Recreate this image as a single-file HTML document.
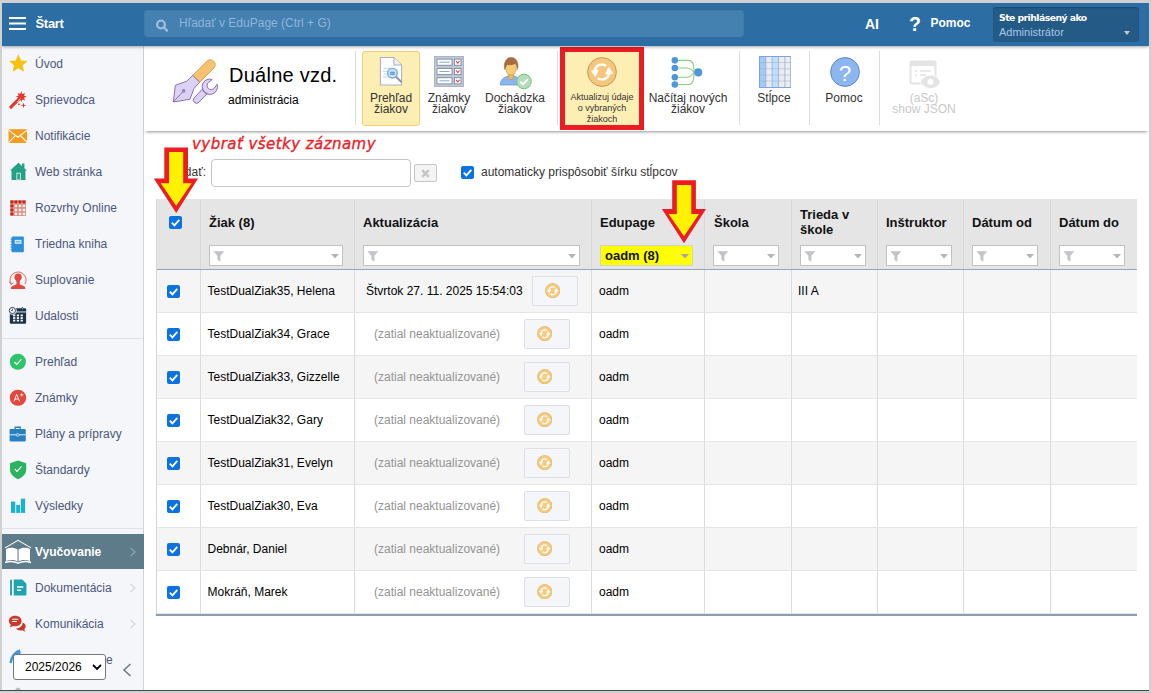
<!DOCTYPE html>
<html lang="sk">
<head>
<meta charset="utf-8">
<title>Duálne vzdelávanie - administrácia</title>
<style>
*{box-sizing:border-box;margin:0;padding:0}
html,body{width:1151px;height:693px;overflow:hidden;background:#d1d1d1;font-family:"Liberation Sans",Arial,sans-serif;font-size:12px;color:#000}
.abs{position:absolute}
#frame{position:absolute;left:2px;top:3px;width:1147px;height:687px;background:#fff;overflow:hidden}
#bottomline{position:absolute;left:0;top:690px;width:1149px;height:1px;background:#3f4a4a}
/* header */
#hdr{position:absolute;left:0;top:0;width:1147px;height:43px;background:#2c6da3;box-shadow:0 1px 3px rgba(0,0,0,.35);z-index:5}
#hdr .burger{position:absolute;left:7px;top:14.2px;width:17px;height:1.7px;background:#fff;box-shadow:0 5.5px 0 #fff,0 11px 0 #fff}
#hdr .start{position:absolute;left:33.5px;top:13px;font-weight:bold;font-size:13px;color:#fff;letter-spacing:-0.3px}
#search{position:absolute;left:142px;top:6.3px;width:600px;height:27.7px;background:#4480b0;border-radius:4px;box-shadow:inset 0 1px 1px rgba(20,60,100,.35)}
#search span{position:absolute;left:35px;top:6.700px;color:#8fb5d8;font-size:12px}
#hdr .ai{position:absolute;left:863px;top:13px;font-weight:bold;font-size:14px;color:#fff;letter-spacing:-0.2px}
#hdr .q{position:absolute;left:907px;top:10px;font-weight:bold;font-size:19.500px;color:#fff}
#hdr .pomoc{position:absolute;left:928.500px;top:13px;font-weight:bold;font-size:12px;color:#fff}
#user{position:absolute;left:991px;top:4px;width:146px;height:35px;background:#245a86;border-radius:3px;box-shadow:inset 0 1px 1px rgba(10,40,70,.35)}
#user .l1{position:absolute;left:6px;top:4.500px;font-weight:bold;font-size:9.300px;color:#fff;font-family:"DejaVu Sans","Liberation Sans",sans-serif;letter-spacing:-0.55px;white-space:nowrap}
#user .l2{position:absolute;left:6px;top:19px;font-size:11px;color:#a9c7ea}
#user .arr{position:absolute;left:131px;top:24px;width:0;height:0;border-left:3.800px solid transparent;border-right:3.800px solid transparent;border-top:4px solid #c8c8c8}
/* sidebar */
#side{position:absolute;left:0;top:43px;width:142px;height:644px;background:#f5f6f9;border-right:1px solid #d0d2d6}
.mi{position:absolute;left:33px;font-size:12px;color:#4a577d;white-space:nowrap;margin-top:1px}
.ic{position:absolute;left:7px;width:18px;height:18px}
.sdiv{position:absolute;left:0;width:141px;height:1px;background:#dfe2e6}
.chev{position:absolute;left:126px;color:#c5c9ce;font-size:12px}
/* toolbar */
#tb{position:absolute;left:142px;top:43px;width:1005px;height:85px;background:#fff;box-shadow:0 3px 3px -2px rgba(0,0,0,.42);z-index:3}
.tsep{position:absolute;top:5px;width:1px;height:74px;background:#dcdcdc}
.tbtn{position:absolute;top:5px;height:74px;text-align:center;font-size:12px;line-height:11px;color:#333;white-space:nowrap}
.tbtn .lbl{position:absolute;left:0;right:0;top:42px}
/* table */
#grid{position:absolute;left:155px;top:196px;width:981px}

#content{position:absolute;left:142px;top:127px;width:1005px;height:560px;background:#fff}
.note{position:absolute;left:48px;top:5px;-webkit-text-stroke:0.35px #ea2128;font-family:"DejaVu Sans","Liberation Sans",cursive;font-style:italic;font-size:15px;color:#ea2128;white-space:nowrap;letter-spacing:0.45px}
#grid{position:absolute;left:12px;top:69px;width:981px;height:418px}
#ghead{position:absolute;left:0;top:0;width:981px;height:71px;background:#e5e5e5;border-bottom:1px solid #93a5ba}
.hc{position:absolute;top:0;height:70px;border-left:1px solid #d9d9d9}
.hl{position:absolute;left:8px;font-weight:bold;font-size:13px;color:#111;white-space:nowrap;line-height:15px}
.fi{position:absolute;top:46px;height:21px;background:#fff;border:1px solid #c2c2c2}
.fi svg.fun{position:absolute;left:3px;top:4.500px}
.fi svg.dd{position:absolute;right:3px;top:8px}
.row{position:absolute;left:0;width:981px;height:43px;border-bottom:1px solid #e6e6e6;font-size:12px;color:#000}
.row.o{background:#f5f5f5}
.c{position:absolute;top:0;height:42px;border-left:1px solid #dcdcdc}
.t{position:absolute;top:14px;white-space:nowrap}
.g{color:#949494}
.cb{position:absolute;width:13px;height:13px;background:#0b73e0;border-radius:2px}
.cb svg{position:absolute;left:0;top:0}
.rb{position:absolute;top:6px;width:46px;height:30px;background:#f5f6fa;border:1px solid #dddee6;border-radius:2px}
.rb svg{position:absolute;left:12px;top:6px}
</style>
</head>
<body>
<div id="frame">
  <div id="hdr">
    <div class="burger"></div>
    <div class="start">Štart</div>
    <div id="search">
      <svg class="abs" style="left:11px;top:9px" width="14" height="14" viewBox="0 0 14 14"><circle cx="6" cy="6.500" r="3.900" fill="none" stroke="#9cbedd" stroke-width="2.300"/><path d="M9 9.500 L12 12.600" stroke="#9cbedd" stroke-width="2.300" stroke-linecap="round"/></svg>
      <span>Hľadať v EduPage (Ctrl + G)</span>
    </div>
    <div class="ai">AI</div>
    <div class="q">?</div>
    <div class="pomoc">Pomoc</div>
    <div id="user"><div class="l1">Ste prihlásený ako</div><div class="l2">Administrátor</div><div class="arr"></div></div>
  </div>
  <div id="side">
<svg class="abs" style="left:5.75px;top:7.35px" width="20.70" height="20.22" viewBox="0 0 18 18" preserveAspectRatio="none"><path d="M9 1.2 L11.3 6.6 L17 7.1 L12.7 10.9 L14 16.6 L9 13.6 L4 16.6 L5.3 10.9 L1 7.1 L6.7 6.6 Z" fill="#f6c10f"/></svg><div class="mi" style="top:10px">Úvod</div>
<svg class="abs" style="left:4px;top:40px" width="26" height="26" viewBox="0 0 26 26"><path d="M4.9 21.200000000000003 L13.600000000000001 12.299999999999997" stroke="#e03a2d" stroke-width="3.1" stroke-linecap="round"/><polygon points="15.30,5.30 16.41,8.02 19.12,6.88 17.98,9.59 20.70,10.70 17.98,11.81 19.12,14.52 16.41,13.38 15.30,16.10 14.19,13.38 11.48,14.52 12.62,11.81 9.90,10.70 12.62,9.59 11.48,6.88 14.19,8.02" fill="#e03a2d"/><path d="M11.6 15.600000000000001 L14.2 12.899999999999999" stroke="#f6d9d5" stroke-width="0.9" stroke-linecap="round"/><polygon points="17.50,16.50 18.14,18.76 20.40,19.40 18.14,20.04 17.50,22.30 16.86,20.04 14.60,19.40 16.86,18.76" fill="#e03a2d"/><ellipse cx="12.899999999999999" cy="18.299999999999997" rx="1.1" ry="0.7" fill="#e03a2d"/></svg><div class="mi" style="top:46px">Sprievodca</div>
<svg class="abs" style="left:5.98px;top:79.82px" width="18.80" height="19.11" viewBox="0 0 18 18" preserveAspectRatio="none"><rect x="0.5" y="3" width="18" height="13" fill="#f39c1f"/><path d="M0.5 3.6 L9.5 10.6 L18.5 3.6 M0.5 15.6 L7 9 M18.5 15.6 L12 9" stroke="#fff" stroke-width="1" fill="none"/></svg><div class="mi" style="top:82px">Notifikácie</div>
<svg class="abs" style="left:6.54px;top:115.33px" width="19.01" height="20.09" viewBox="0 0 18 18" preserveAspectRatio="none"><path d="M1 8.6 L9 1.5 L17 8.6 L15.6 8.6 L15.6 17 L2.4 17 L2.4 8.6 Z" fill="#23a085"/><rect x="12.4" y="2.2" width="2.2" height="4" fill="#23a085"/><rect x="7.4" y="11" width="3.4" height="6" fill="none" stroke="#bfe6dc" stroke-width="1"/></svg><div class="mi" style="top:118px">Web stránka</div>
<svg class="abs" style="left:8px;top:154px" width="16" height="16" viewBox="0 0 16 16"><rect x="0" y="0" width="16" height="16" rx="1" fill="#dc8a80"/><rect x="0" y="0" width="16" height="4" fill="#e3a199"/><rect x="0" y="0" width="4" height="16" fill="#e3a199"/><rect x="0.5" y="0.5" width="3" height="3" rx=".8" fill="#c1291b"/><rect x="4.4" y="0.5" width="3" height="3" rx=".8" fill="#c1291b"/><rect x="8.5" y="0.5" width="3" height="3" rx=".8" fill="#c1291b"/><rect x="12.4" y="0.5" width="3" height="3" rx=".8" fill="#c1291b"/><rect x="0.5" y="4.4" width="3" height="3" rx=".8" fill="#c1291b"/><rect x="4.65" y="4.65" width="2.500" height="2.500" fill="#fbf3f2"/><rect x="8.75" y="4.65" width="2.500" height="2.500" fill="#fbf3f2"/><rect x="12.65" y="4.65" width="2.500" height="2.500" fill="#fbf3f2"/><rect x="0.5" y="8.5" width="3" height="3" rx=".8" fill="#c1291b"/><rect x="4.65" y="8.75" width="2.500" height="2.500" fill="#fbf3f2"/><rect x="8.75" y="8.75" width="2.500" height="2.500" fill="#fbf3f2"/><rect x="12.65" y="8.75" width="2.500" height="2.500" fill="#fbf3f2"/><rect x="0.5" y="12.4" width="3" height="3" rx=".8" fill="#c1291b"/><rect x="4.65" y="12.65" width="2.500" height="2.500" fill="#fbf3f2"/><rect x="8.75" y="12.65" width="2.500" height="2.500" fill="#fbf3f2"/><rect x="12.65" y="12.65" width="2.500" height="2.500" fill="#fbf3f2"/></svg><div class="mi" style="top:154px">Rozvrhy Online</div>
<svg class="abs" style="left:6.42px;top:189.12px" width="18.56" height="18.96" viewBox="0 0 18 18" preserveAspectRatio="none"><rect x="3.4" y="1.5" width="12" height="15" rx="1" fill="#2b8fd9"/><rect x="6.5" y="4.6" width="6.6" height="3.8" fill="#d6ebfa"/><rect x="7.6" y="5.8" width="4.4" height="1.3" fill="#2b8fd9" opacity=".6"/><path d="M2.6 4h1.6M2.6 6.5h1.6M2.6 9h1.6M2.6 11.5h1.6M2.6 14h1.6" stroke="#2b8fd9" stroke-width="1"/></svg><div class="mi" style="top:190px">Triedna kniha</div>
<svg class="abs" style="left:6px;top:222px" width="22" height="23" viewBox="0 0 22 23"><path d="M3.300 16.200 A8 8 0 1 1 16.900 16.200" fill="none" stroke="#e4574b" stroke-width=".9"/><path d="M1.300 13.600l1.700 2.900 2.500-1.700" fill="none" stroke="#e4574b" stroke-width=".9"/><ellipse cx="10.100" cy="9.300" rx="3.600" ry="3.700" fill="#e2483c"/><path d="M2.900 21.100C2.900 19 3.600 18.200 5 17.700L7.600 16.800C8.300 16.500 8.500 16 8.500 15.300L8.200 11.500H12L11.700 15.300C11.700 16 11.900 16.500 12.600 16.800L15.200 17.700C16.600 18.200 17.300 19 17.300 21.100Z" fill="#e2483c"/></svg><div class="mi" style="top:226px">Suplovanie</div>
<svg class="abs" style="left:6px;top:260px" width="20" height="19" viewBox="0 0 20 19"><rect x="1.800" y="2.300" width="16.300" height="15.500" rx="1" fill="#1f3347"/><rect x="13.700" y="1" width="1.500" height="3" rx=".7" fill="#1f3347"/><rect x="14.150" y="1.800" width=".6" height="1.600" fill="#dfe4ea"/><rect x="5" y="5" width="13.100" height="1.800" fill="#8595a4"/><circle cx="4.400" cy="4.500" r="4.300" fill="#f5f6fa"/><circle cx="4.400" cy="4.500" r="3.100" fill="#f5f6fa" stroke="#1f3347" stroke-width=".9"/><path d="M4.400 2.700v2h-1.300" stroke="#1f3347" stroke-width=".8" fill="none"/><rect x="5.10" y="8.50" width="2.200" height="1.800" fill="#fff"/><rect x="8.80" y="8.50" width="2.200" height="1.800" fill="#fff"/><rect x="12.60" y="8.50" width="2.200" height="1.800" fill="#fff"/><rect x="5.10" y="11.10" width="2.200" height="1.800" fill="#fff"/><rect x="8.80" y="11.10" width="2.200" height="1.800" fill="#fff"/><rect x="12.60" y="11.10" width="2.200" height="1.800" fill="#fff"/><rect x="5.10" y="13.70" width="2.200" height="1.800" fill="#fff"/><rect x="8.80" y="13.70" width="2.200" height="1.800" fill="#fff"/><rect x="12.60" y="13.70" width="2.200" height="1.800" fill="#fff"/></svg><div class="mi" style="top:262px">Udalosti</div>
<svg class="abs" style="left:6.15px;top:305.96px" width="19.70" height="19.58" viewBox="0 0 18 18" preserveAspectRatio="none"><circle cx="9" cy="9" r="7.400" fill="#2fc36b"/><path d="M5.800 9.200l2.200 2.200 4.200-4.600" stroke="#fff" stroke-width="1" fill="none"/></svg><div class="mi" style="top:308px">Prehľad</div>
<svg class="abs" style="left:5.93px;top:341.76px" width="19.95" height="19.58" viewBox="0 0 18 18" preserveAspectRatio="none"><circle cx="9" cy="9" r="7.400" fill="#e2463c"/><path d="M5.400 12.400l2.400-6.600 2.600 6.400M6.300 10.300l3.100-.3M11 6.300h2.800M12.400 4.900v2.800" stroke="#fff" stroke-width=".8" fill="none"/></svg><div class="mi" style="top:344px">Známky</div>
<svg class="abs" style="left:6.32px;top:378.01px" width="18.94" height="19.43" viewBox="0 0 18 18" preserveAspectRatio="none"><rect x="1.500" y="4.600" width="15.400" height="11.600" rx="1" fill="#2a7fc0"/><path d="M6.800 4.600v-1.600h4.800v1.600" stroke="#2a7fc0" stroke-width="1.200" fill="none"/><path d="M1.500 10h15.400" stroke="#d6e8f6" stroke-width="1"/><rect x="8" y="9" width="2.400" height="2.200" rx=".6" fill="#2a7fc0" stroke="#d6e8f6" stroke-width=".8"/></svg><div class="mi" style="top:380px">Plány a prípravy</div>
<svg class="abs" style="left:5.88px;top:413.21px" width="20.25" height="20.89" viewBox="0 0 18 18" preserveAspectRatio="none"><path d="M9 1.200l7.200 2.400v5.200c0 4-3 6.800-7.200 8.600C4.800 15.600 1.800 12.800 1.800 8.800V3.600z" fill="#2bb35f"/><path d="M6 8.600l2.100 2.100 3.900-4.300" stroke="#fff" stroke-width="1" fill="none"/></svg><div class="mi" style="top:416px">Štandardy</div>
<svg class="abs" style="left:8px;top:452px" width="17" height="16" viewBox="0 0 17 16"><rect x="1" y="3.600" width="4.300" height="11.300" fill="#1ab3cf"/><rect x="6.200" y="6.900" width="3.900" height="8" fill="#1ab3cf"/><rect x="10.800" y=".7" width="4.300" height="14.200" fill="#1ab3cf"/></svg><div class="mi" style="top:452px">Výsledky</div>
<div class="sdiv" style="top:292px"></div><div class="sdiv" style="top:482px"></div>
<div class="abs" style="left:0;top:488px;width:142px;height:35px;background:#5e7b8a"></div>
<svg class="abs" style="left:2px;top:493px" width="28.100" height="26" viewBox="0 0 27 25"><path d="M1 8.500 L13.500 1.200 L26 8.500" stroke="#fff" stroke-width="1" fill="none"/><path d="M2 9.500c3.500-1.600 7.500-1.600 11 .600v11.500c-3.500-1.800-7.500-1.800-11-.400z M25 9.500c-3.500-1.600-7.500-1.600-11 .600v11.500c3.500-1.800 7.500-1.800 11-.400z" fill="#fff"/><path d="M1 22.600c4-1.300 8.500-1.300 12.500.600 4-1.900 8.500-1.900 12.500-.600" stroke="#fff" stroke-width="1.300" fill="none"/></svg>
<div class="mi" style="top:498px;color:#fff;font-weight:bold;letter-spacing:0">Vyučovanie</div>
<svg class="abs" style="left:127px;top:501px" width="8" height="10" viewBox="0 0 8 10"><path d="M1.500 1l4.500 4-4.500 4" stroke="#8ea3af" stroke-width="1.200" fill="none"/></svg>
<svg class="abs" style="left:6.740px;top:532.200px" width="19.040" height="19.200" viewBox="0 0 18 18" preserveAspectRatio="none"><rect x="1" y="1.500" width="1.800" height="15" rx=".9" fill="#1fa3b0"/><path d="M4.500 1.500h8l4 4v10a1 1 0 0 1-1 1h-11z" fill="#1fa3b0"/><path d="M7.500 8.500h6M7.500 11.500h4" stroke="#fff" stroke-width="1.500"/></svg>
<div class="mi" style="top:534px">Dokumentácia</div>
<svg class="abs" style="left:127px;top:537px" width="8" height="10" viewBox="0 0 8 10"><path d="M1.500 1l4.500 4-4.500 4" stroke="#d3d7db" stroke-width="1.200" fill="none"/></svg>
<svg class="abs" style="left:6.480px;top:568.100px" width="18.540" height="20.140" viewBox="0 0 18 18" preserveAspectRatio="none"><path d="M7 1.500c3.600 0 6.200 2 6.200 4.700s-2.600 4.700-6.200 4.700c-.7 0-1.400-.1-2-.2L1.800 12l1-2.400C1.600 8.700.8 7.500.8 6.200.8 3.500 3.400 1.500 7 1.500z" fill="#c83a2e"/><path d="M14.300 7.500c1.700.7 2.900 2 2.900 3.500 0 1-.5 1.900-1.400 2.600l.8 2.200-2.700-1.200c-.5.100-1.100.2-1.700.2-2 0-3.700-.7-4.600-1.800 3.700-.2 6.500-2.300 6.700-5.500z" fill="#c83a2e"/><path d="M4 4.800h6M4 6.800h4.500" stroke="#fff" stroke-width=".9"/></svg>
<div class="mi" style="top:570px">Komunikácia</div>
<svg class="abs" style="left:127px;top:573px" width="8" height="10" viewBox="0 0 8 10"><path d="M1.500 1l4.500 4-4.500 4" stroke="#d3d7db" stroke-width="1.200" fill="none"/></svg>
<svg class="abs" style="left:7px;top:603px" width="16" height="16" viewBox="0 0 16 16"><path d="M1.500 14 C2.500 8 5 3.500 11 1.500" stroke="#3b97e0" stroke-width="2.400" fill="none"/><path d="M6 4.500 L12 2.500 L10.500 8" fill="#3b97e0"/></svg>
<div class="mi" style="left:104px;top:606px">e</div>
<svg class="abs" style="left:12px;top:640px" width="8" height="5" viewBox="0 0 8 5"><path d="M1 5 L2 2.500 L4 1.500 L6 2.500 L7 5" fill="#b3bcc5"/></svg>
<div class="abs" id="yearsel" style="left:11px;top:608px;width:93px;height:26px;background:#fff;border:1px solid #767676;border-radius:3px"><span class="abs" style="left:11px;top:5px;font-size:12px;color:#000">2025/2026</span><svg class="abs" style="left:77.500px;top:9px" width="10" height="7" viewBox="0 0 10 7"><path d="M1 1l4 4 4-4" stroke="#000" stroke-width="1.800" fill="none"/></svg></div>
<svg class="abs" style="left:120px;top:617px" width="10" height="14" viewBox="0 0 10 14"><path d="M8.500 1 L2 7 L8.500 13" stroke="#6d7c88" stroke-width="1.600" fill="none"/></svg>
</div>
  <div id="tb">
<!-- title -->
<svg class="abs" style="left:25px;top:10px" width="53.25" height="53.25" viewBox="0 0 50 50"><path d="M22.3 18.2 L35.7 4.8 A4.6 4.6 0 0 1 42.2 11.3 L28.8 24.7 Z" fill="#f6c170" stroke="#d9a24c" stroke-width=".9" stroke-linejoin="round"/><path d="M22.3 18.2 L16.6 23.7 L6.0 27.5 L4.0 43.2 L19.7 40.6 L23.5 30.4 L28.8 24.7 Z" fill="#dcd2f3" stroke="#8a68ad" stroke-width=".9" stroke-linejoin="round"/><path d="M4.0 43.2 L13.7 32.8" stroke="#8a68ad" stroke-width=".9"/><circle cx="13.7" cy="32.8" r="1.700" fill="#9b7cbd"/><path d="M35.8 35.3 L28.1 43.4 A3.0 3.0 0 0 1 23.7 39.3 L31.3 31.1 A6.9 6.9 0 0 0 45.2 26.5 L42.4 30.4 A3.4 3.4 0 0 1 36.9 24.9 L40.6 22.1 A6.9 6.9 0 0 0 35.8 35.3 Z" fill="#dcd2f3" stroke="#8a68ad" stroke-width=".9" stroke-linejoin="round"/></svg>
<div class="abs" style="left:85px;top:18px;font-size:20px;color:#000;white-space:nowrap;letter-spacing:.25px">Duálne vzd.</div>
<div class="abs" style="left:84px;top:47px;font-size:12px;color:#000">administrácia</div>
<div class="tsep" style="left:211px"></div>

<!-- Prehlad ziakov (active) -->
<div class="tbtn" style="left:218px;width:58px;height:75px;background:#fdeeb4;border:1px solid #f3cf74;border-radius:3px">
  <svg class="abs" style="left:16px;top:4px" width="25" height="30.500" viewBox="0 0 26 32" preserveAspectRatio="none"><path d="M1.500 1.500h14l8 8v21h-22z" fill="#fdfdfe" stroke="#a9b3c3" stroke-width="1.100"/><path d="M15.500 1.500v8h8" fill="#eef0f4" stroke="#a9b3c3" stroke-width="1.100"/><path d="M5 13h8M4 16h6M5 19h5M4 22h7" stroke="#b9d3ef" stroke-width="1"/><circle cx="14" cy="18" r="5" fill="#cfe5fa" stroke="#7aa7d6" stroke-width="1.500"/><path d="M11.500 17h5M11.500 19h5" stroke="#3f86d0" stroke-width="1.200"/><path d="M18 22l5 5" stroke="#8f9bab" stroke-width="2.200" stroke-linecap="round"/></svg>
  <div class="lbl" style="top:41px;left:-1px;right:-1px">Prehľad<br>žiakov</div>
</div>
<!-- Znamky ziakov -->
<div class="tbtn" style="left:276px;width:58px">
  <svg class="abs" style="left:14px;top:5px" width="30" height="31" viewBox="0 0 30 30" preserveAspectRatio="none"><rect x=".5" y=".5" width="29" height="29" fill="#c0cad6" stroke="#aab5c4"/><g fill="#fdfdfe" stroke="#7f8b9d" stroke-width=".9"><rect x="3" y="3" width="15" height="6"/><rect x="3" y="12" width="15" height="6"/><rect x="3" y="21" width="15" height="6"/><rect x="20.500" y="3" width="6.500" height="6"/><rect x="20.500" y="12" width="6.500" height="6"/><rect x="20.500" y="21" width="6.500" height="6"/></g><path d="M5.500 6h10M5.500 15h10M5.500 24h10" stroke="#6b95cf" stroke-width=".8"/><path d="M22 5l1.800 2 1.800-2M22 14l1.800 2 1.800-2M22 23l1.800 2 1.800-2" stroke="#e0484f" stroke-width="1.100" fill="none"/></svg>
  <div class="lbl">Známky<br>žiakov</div>
</div>
<!-- Dochadzka -->
<div class="tbtn" style="left:336px;width:70px">
  <svg class="abs" style="left:18px;top:5px" width="34" height="34" viewBox="0 0 34 34"><path d="M2.300 29c0-5 3-8 8.200-9h5c5.200 1 8.200 4 8.200 9z" fill="#8bb5ec" stroke="#5f93d6" stroke-width=".7"/><path d="M10.300 17h5.400v4.300c-.6 1.400-1.600 2.200-2.700 2.200s-2.100-.8-2.700-2.200z" fill="#edb95f" stroke="#c98f3f" stroke-width=".6"/><ellipse cx="13" cy="12.300" rx="5.300" ry="6.800" fill="#f6cd76" stroke="#cf9a45" stroke-width=".7"/><path d="M6.700 13.500c-1.300-6 1.200-12 6.300-12s8 4.500 6.600 12c-.4-2.800-1-4.800-2.400-6.300-2.200 1.600-5.700 2.100-7.900 1.200-1.200 1.300-2 3-2.600 5.100z" fill="#a86c40" stroke="#94592f" stroke-width=".5"/><circle cx="26" cy="25.500" r="7.300" fill="#b4dcb8" stroke="#79bf86" stroke-width="1"/><path d="M22.300 25.700l2.700 2.600 4.800-5.200" stroke="#fff" stroke-width="2" fill="none"/></svg>
  <div class="lbl">Dochádzka<br>žiakov</div>
</div>
<div class="tsep" style="left:413px"></div>
<!-- Aktualizuj (highlighted red) -->
<div class="abs" style="left:416px;top:1px;width:84px;height:83px;background:#ec1c24"></div>
<div class="tbtn" style="left:421px;top:6px;width:74px;height:73px;background:#fdeeb4;font-size:9px;line-height:11px">
  <svg class="abs" style="left:22px;top:5px" width="30" height="30" viewBox="0 0 30 30"><circle cx="15" cy="15" r="14.400" fill="#f5c77c" stroke="#b98a4a" stroke-width=".8"/><path d="M19.30 8.86 A7.5 7.5 0 0 0 7.72 13.19" stroke="#fff" stroke-width="2.400" fill="none"/><path d="M10.70 21.14 A7.5 7.5 0 0 0 22.28 16.81" stroke="#fff" stroke-width="2.400" fill="none"/><path d="M3.600 13.600L11.900 12.400L8.500 20.200Z" fill="#fff"/><path d="M26.400 16.400L18.100 17.600L21.500 9.800Z" fill="#fff"/></svg>
  <div class="lbl" style="top:40px">Aktualizuj údaje<br>o vybraných<br>žiakoch</div>
</div>
<!-- Nacitaj novych -->
<div class="tbtn" style="left:500px;width:88px">
  <svg class="abs" style="left:27px;top:5.900px" width="32.500" height="30.850" viewBox="0 0 34 32" preserveAspectRatio="none"><g fill="none" stroke="#8fcf7a" stroke-width="1.100"><path d="M4 3.500h14c5 0 6 4 6 12.500"/><path d="M4 11.500h12c4 0 6 1.500 8 4.500"/><path d="M4 21h12c4 0 6-2 8-5"/><path d="M4 28.500h14c5 0 6-4 6-12.500"/></g><g fill="#4e96dc"><circle cx="4" cy="3.500" r="3.400"/><circle cx="4" cy="11.500" r="3.400"/><circle cx="4" cy="21" r="3.400"/><circle cx="4" cy="28.500" r="3.400"/><circle cx="28.500" cy="16" r="4.200"/></g></svg>
  <div class="lbl">Načítaj nových<br>žiakov</div>
</div>
<div class="tsep" style="left:595px"></div>
<!-- Stlpce -->
<div class="tbtn" style="left:604px;width:52px">
  <svg class="abs" style="left:11px;top:5px" width="32.400" height="32" viewBox="0 0 32 32" preserveAspectRatio="none"><rect x=".5" y=".5" width="31" height="31" fill="#ececec"/><rect x=".5" y=".5" width="6.200" height="31" fill="#a3cbf5"/><rect x="12.900" y=".5" width="6.400" height="31" fill="#bfe0fc"/><path d="M0 6.500h32M0 12.700h32M0 18.900h32M0 25.100h32" stroke="#86abdc" stroke-opacity=".45" stroke-width="1"/><path d="M6.700 0v32M12.900 0v32M19.300 0v32M25.600 0v32" stroke="#86a6d0" stroke-opacity=".75" stroke-width=".9"/><rect x=".5" y=".5" width="31" height="31" fill="none" stroke="#7ea5da" stroke-width="1"/></svg>
  <div class="lbl">Stĺpce</div>
</div>
<div class="tsep" style="left:665px"></div>
<!-- Pomoc -->
<div class="tbtn" style="left:674px;width:52px">
  <svg class="abs" style="left:12px;top:6px" width="30" height="30" viewBox="0 0 30 30"><circle cx="15" cy="15" r="14.400" fill="#8cb6ef" stroke="#5580c0" stroke-width=".9"/><text x="15" y="23.700" font-family="Liberation Sans, sans-serif" font-size="22.500" fill="#fff" text-anchor="middle">?</text></svg>
  <div class="lbl">Pomoc</div>
</div>
<div class="tsep" style="left:735px"></div>
<!-- aSc show JSON -->
<div class="tbtn" style="left:740px;width:80px;color:#c9c9c9">
  <svg class="abs" style="left:25px;top:9px" width="32" height="30" viewBox="0 0 32 30"><rect x="1.500" y="1.500" width="25" height="22" rx="1.500" fill="#fff" stroke="#e4e4e4" stroke-width="2"/><rect x="1" y="1" width="26" height="5" fill="#e4e4e4"/><path d="M6 11h2M11 11h11M6 15h2M11 15h6" stroke="#e4e4e4" stroke-width="1.500"/><path d="M11 22c3-5.500 8-7 11-7s7 1.500 9.500 7c-2.500 5-6.500 6.500-9.500 6.500s-8-1.500-11-6.500z" fill="#e4e4e4" stroke="#fff" stroke-width="1"/><circle cx="21.500" cy="22" r="3" fill="#fff"/></svg>
  <div class="lbl">(aSc)<br>show JSON</div>
</div>
</div>
  <div id="content">
<div class="note">vybrať všetky záznamy</div>
<div class="abs" style="left:22px;top:35px;font-size:12px;color:#333">Hľadať:</div>
<div class="abs" style="left:67px;top:29px;width:200px;height:28px;border:1px solid #c4c4c4;border-radius:4px;background:#fff"></div>
<div class="abs" style="left:270px;top:34px;width:23px;height:18px;border:1px solid #c6c6c6;border-radius:2px;background:#f4f4f4"><svg class="abs" style="left:6px;top:3.500px" width="9" height="9" viewBox="0 0 9 9"><path d="M1.200 1.200l6.600 6.600M7.800 1.200l-6.600 6.600" stroke="#c6c6c6" stroke-width="2.600"/></svg></div>
<div class="cb" style="left:317px;top:36px"><svg width="13" height="13" viewBox="0 0 13 13"><path d="M2.800 6.700l2.600 2.600 4.900-5.400" stroke="#fff" stroke-width="1.900" fill="none"/></svg></div>
<div class="abs" style="left:337px;top:35px;font-size:12px;color:#333;white-space:nowrap">automaticky prispôsobiť šírku stĺpcov</div>
<div id="grid"><div id="ghead"><div class="cb" style="left:13px;top:17px"><svg width="13" height="13" viewBox="0 0 13 13"><path d="M2.800 6.700l2.600 2.600 4.900-5.400" stroke="#fff" stroke-width="1.900" fill="none"/></svg></div><div class="hc" style="left:44px;width:155px"><div class="hl" style="top:16px">Žiak (8)</div><div class="fi" style="left:8px;width:134px"><svg class="fun" width="12" height="11" viewBox="0 0 12 11"><path d="M.3 .2h11l-3.900 4.600v5.900l-3-2v-3.900z" fill="#c3c4c9"/></svg><svg class="dd" width="8" height="5" viewBox="0 0 8 5"><path d="M0 0h8l-4 4.500z" fill="#b5b5b5"/></svg></div></div><div class="hc" style="left:198px;width:237px"><div class="hl" style="top:16px">Aktualizácia</div><div class="fi" style="left:8px;width:217px"><svg class="fun" width="12" height="11" viewBox="0 0 12 11"><path d="M.3 .2h11l-3.900 4.600v5.900l-3-2v-3.900z" fill="#c3c4c9"/></svg><svg class="dd" width="8" height="5" viewBox="0 0 8 5"><path d="M0 0h8l-4 4.500z" fill="#b5b5b5"/></svg></div></div><div class="hc" style="left:435px;width:113px"><div class="hl" style="top:16px">Edupage</div><div class="fi" style="left:8px;width:93px;background:#ffff00;border-color:#d4d4c4"><span class="abs" style="left:4px;top:2px;font-weight:bold;font-size:13px;color:#111;white-space:nowrap">oadm (8)</span><svg class="dd" width="8" height="5" viewBox="0 0 8 5"><path d="M0 0h8l-4 4.500z" fill="#aaa2aa"/></svg></div></div><div class="hc" style="left:548px;width:87px"><div class="hl" style="top:16px;left:9px">Škola</div><div class="fi" style="left:8px;width:66px"><svg class="fun" width="12" height="11" viewBox="0 0 12 11"><path d="M.3 .2h11l-3.900 4.600v5.900l-3-2v-3.900z" fill="#c3c4c9"/></svg><svg class="dd" width="8" height="5" viewBox="0 0 8 5"><path d="M0 0h8l-4 4.500z" fill="#b5b5b5"/></svg></div></div><div class="hc" style="left:635px;width:86px"><div class="hl" style="top:8px">Trieda v<br>škole</div><div class="fi" style="left:8px;width:66px"><svg class="fun" width="12" height="11" viewBox="0 0 12 11"><path d="M.3 .2h11l-3.900 4.600v5.900l-3-2v-3.900z" fill="#c3c4c9"/></svg><svg class="dd" width="8" height="5" viewBox="0 0 8 5"><path d="M0 0h8l-4 4.500z" fill="#b5b5b5"/></svg></div></div><div class="hc" style="left:721px;width:86px"><div class="hl" style="top:16px">Inštruktor</div><div class="fi" style="left:8px;width:66px"><svg class="fun" width="12" height="11" viewBox="0 0 12 11"><path d="M.3 .2h11l-3.900 4.600v5.900l-3-2v-3.900z" fill="#c3c4c9"/></svg><svg class="dd" width="8" height="5" viewBox="0 0 8 5"><path d="M0 0h8l-4 4.500z" fill="#b5b5b5"/></svg></div></div><div class="hc" style="left:807px;width:87px"><div class="hl" style="top:16px">Dátum od</div><div class="fi" style="left:8px;width:66px"><svg class="fun" width="12" height="11" viewBox="0 0 12 11"><path d="M.3 .2h11l-3.900 4.600v5.900l-3-2v-3.900z" fill="#c3c4c9"/></svg><svg class="dd" width="8" height="5" viewBox="0 0 8 5"><path d="M0 0h8l-4 4.500z" fill="#b5b5b5"/></svg></div></div><div class="hc" style="left:894px;width:87px"><div class="hl" style="top:16px">Dátum do</div><div class="fi" style="left:8px;width:66px"><svg class="fun" width="12" height="11" viewBox="0 0 12 11"><path d="M.3 .2h11l-3.900 4.600v5.900l-3-2v-3.900z" fill="#c3c4c9"/></svg><svg class="dd" width="8" height="5" viewBox="0 0 8 5"><path d="M0 0h8l-4 4.500z" fill="#b5b5b5"/></svg></div></div></div><div class="row o" style="top:71px"><div class="cb" style="left:11px;top:15px"><svg width="13" height="13" viewBox="0 0 13 13"><path d="M2.800 6.700l2.600 2.600 4.900-5.400" stroke="#fff" stroke-width="1.900" fill="none"/></svg></div><div class="c" style="left:44px;width:155px"><span class="t" style="left:6.500px">TestDualZiak35, Helena</span></div><div class="c" style="left:198px;width:237px"><span class="t" style="left:11px">Štvrtok 27. 11. 2025 15:54:03</span><div class="rb" style="left:177px"><svg width="15.400" height="15.400" viewBox="0 0 30 30"><circle cx="15" cy="15" r="14" fill="#f6cb80" stroke="#e3b266" stroke-width="1.500"/><path d="M19.30 8.86 A7.5 7.5 0 0 0 7.72 13.19" stroke="#fff" stroke-width="2.600" fill="none"/><path d="M10.70 21.14 A7.5 7.5 0 0 0 22.28 16.81" stroke="#fff" stroke-width="2.600" fill="none"/><path d="M3.600 13.600L11.900 12.400L8.500 20.200Z" fill="#fff"/><path d="M26.400 16.400L18.100 17.600L21.500 9.800Z" fill="#fff"/></svg></div></div><div class="c" style="left:435px;width:113px"><span class="t" style="left:7px">oadm</span></div><div class="c" style="left:548px;width:87px"></div><div class="c" style="left:635px;width:86px"><span class="t" style="left:6px">III A</span></div><div class="c" style="left:721px;width:86px"></div><div class="c" style="left:807px;width:87px"></div><div class="c" style="left:894px;width:87px"></div></div><div class="row" style="top:114px"><div class="cb" style="left:11px;top:15px"><svg width="13" height="13" viewBox="0 0 13 13"><path d="M2.800 6.700l2.600 2.600 4.900-5.400" stroke="#fff" stroke-width="1.900" fill="none"/></svg></div><div class="c" style="left:44px;width:155px"><span class="t" style="left:6.500px">TestDualZiak34, Grace</span></div><div class="c" style="left:198px;width:237px"><span class="t g" style="left:19px">(zatial neaktualizované)</span><div class="rb" style="left:169px"><svg width="15.400" height="15.400" viewBox="0 0 30 30"><circle cx="15" cy="15" r="14" fill="#f6cb80" stroke="#e3b266" stroke-width="1.500"/><path d="M19.30 8.86 A7.5 7.5 0 0 0 7.72 13.19" stroke="#fff" stroke-width="2.600" fill="none"/><path d="M10.70 21.14 A7.5 7.5 0 0 0 22.28 16.81" stroke="#fff" stroke-width="2.600" fill="none"/><path d="M3.600 13.600L11.900 12.400L8.500 20.200Z" fill="#fff"/><path d="M26.400 16.400L18.100 17.600L21.500 9.800Z" fill="#fff"/></svg></div></div><div class="c" style="left:435px;width:113px"><span class="t" style="left:7px">oadm</span></div><div class="c" style="left:548px;width:87px"></div><div class="c" style="left:635px;width:86px"></div><div class="c" style="left:721px;width:86px"></div><div class="c" style="left:807px;width:87px"></div><div class="c" style="left:894px;width:87px"></div></div><div class="row o" style="top:157px"><div class="cb" style="left:11px;top:15px"><svg width="13" height="13" viewBox="0 0 13 13"><path d="M2.800 6.700l2.600 2.600 4.900-5.400" stroke="#fff" stroke-width="1.900" fill="none"/></svg></div><div class="c" style="left:44px;width:155px"><span class="t" style="left:6.500px">TestDualZiak33, Gizzelle</span></div><div class="c" style="left:198px;width:237px"><span class="t g" style="left:19px">(zatial neaktualizované)</span><div class="rb" style="left:169px"><svg width="15.400" height="15.400" viewBox="0 0 30 30"><circle cx="15" cy="15" r="14" fill="#f6cb80" stroke="#e3b266" stroke-width="1.500"/><path d="M19.30 8.86 A7.5 7.5 0 0 0 7.72 13.19" stroke="#fff" stroke-width="2.600" fill="none"/><path d="M10.70 21.14 A7.5 7.5 0 0 0 22.28 16.81" stroke="#fff" stroke-width="2.600" fill="none"/><path d="M3.600 13.600L11.900 12.400L8.500 20.200Z" fill="#fff"/><path d="M26.400 16.400L18.100 17.600L21.500 9.800Z" fill="#fff"/></svg></div></div><div class="c" style="left:435px;width:113px"><span class="t" style="left:7px">oadm</span></div><div class="c" style="left:548px;width:87px"></div><div class="c" style="left:635px;width:86px"></div><div class="c" style="left:721px;width:86px"></div><div class="c" style="left:807px;width:87px"></div><div class="c" style="left:894px;width:87px"></div></div><div class="row" style="top:200px"><div class="cb" style="left:11px;top:15px"><svg width="13" height="13" viewBox="0 0 13 13"><path d="M2.800 6.700l2.600 2.600 4.900-5.400" stroke="#fff" stroke-width="1.900" fill="none"/></svg></div><div class="c" style="left:44px;width:155px"><span class="t" style="left:6.500px">TestDualZiak32, Gary</span></div><div class="c" style="left:198px;width:237px"><span class="t g" style="left:19px">(zatial neaktualizované)</span><div class="rb" style="left:169px"><svg width="15.400" height="15.400" viewBox="0 0 30 30"><circle cx="15" cy="15" r="14" fill="#f6cb80" stroke="#e3b266" stroke-width="1.500"/><path d="M19.30 8.86 A7.5 7.5 0 0 0 7.72 13.19" stroke="#fff" stroke-width="2.600" fill="none"/><path d="M10.70 21.14 A7.5 7.5 0 0 0 22.28 16.81" stroke="#fff" stroke-width="2.600" fill="none"/><path d="M3.600 13.600L11.900 12.400L8.500 20.200Z" fill="#fff"/><path d="M26.400 16.400L18.100 17.600L21.500 9.800Z" fill="#fff"/></svg></div></div><div class="c" style="left:435px;width:113px"><span class="t" style="left:7px">oadm</span></div><div class="c" style="left:548px;width:87px"></div><div class="c" style="left:635px;width:86px"></div><div class="c" style="left:721px;width:86px"></div><div class="c" style="left:807px;width:87px"></div><div class="c" style="left:894px;width:87px"></div></div><div class="row o" style="top:243px"><div class="cb" style="left:11px;top:15px"><svg width="13" height="13" viewBox="0 0 13 13"><path d="M2.800 6.700l2.600 2.600 4.900-5.400" stroke="#fff" stroke-width="1.900" fill="none"/></svg></div><div class="c" style="left:44px;width:155px"><span class="t" style="left:6.500px">TestDualZiak31, Evelyn</span></div><div class="c" style="left:198px;width:237px"><span class="t g" style="left:19px">(zatial neaktualizované)</span><div class="rb" style="left:169px"><svg width="15.400" height="15.400" viewBox="0 0 30 30"><circle cx="15" cy="15" r="14" fill="#f6cb80" stroke="#e3b266" stroke-width="1.500"/><path d="M19.30 8.86 A7.5 7.5 0 0 0 7.72 13.19" stroke="#fff" stroke-width="2.600" fill="none"/><path d="M10.70 21.14 A7.5 7.5 0 0 0 22.28 16.81" stroke="#fff" stroke-width="2.600" fill="none"/><path d="M3.600 13.600L11.900 12.400L8.500 20.200Z" fill="#fff"/><path d="M26.400 16.400L18.100 17.600L21.500 9.800Z" fill="#fff"/></svg></div></div><div class="c" style="left:435px;width:113px"><span class="t" style="left:7px">oadm</span></div><div class="c" style="left:548px;width:87px"></div><div class="c" style="left:635px;width:86px"></div><div class="c" style="left:721px;width:86px"></div><div class="c" style="left:807px;width:87px"></div><div class="c" style="left:894px;width:87px"></div></div><div class="row" style="top:286px"><div class="cb" style="left:11px;top:15px"><svg width="13" height="13" viewBox="0 0 13 13"><path d="M2.800 6.700l2.600 2.600 4.900-5.400" stroke="#fff" stroke-width="1.900" fill="none"/></svg></div><div class="c" style="left:44px;width:155px"><span class="t" style="left:6.500px">TestDualZiak30, Eva</span></div><div class="c" style="left:198px;width:237px"><span class="t g" style="left:19px">(zatial neaktualizované)</span><div class="rb" style="left:169px"><svg width="15.400" height="15.400" viewBox="0 0 30 30"><circle cx="15" cy="15" r="14" fill="#f6cb80" stroke="#e3b266" stroke-width="1.500"/><path d="M19.30 8.86 A7.5 7.5 0 0 0 7.72 13.19" stroke="#fff" stroke-width="2.600" fill="none"/><path d="M10.70 21.14 A7.5 7.5 0 0 0 22.28 16.81" stroke="#fff" stroke-width="2.600" fill="none"/><path d="M3.600 13.600L11.900 12.400L8.500 20.200Z" fill="#fff"/><path d="M26.400 16.400L18.100 17.600L21.500 9.800Z" fill="#fff"/></svg></div></div><div class="c" style="left:435px;width:113px"><span class="t" style="left:7px">oadm</span></div><div class="c" style="left:548px;width:87px"></div><div class="c" style="left:635px;width:86px"></div><div class="c" style="left:721px;width:86px"></div><div class="c" style="left:807px;width:87px"></div><div class="c" style="left:894px;width:87px"></div></div><div class="row o" style="top:329px"><div class="cb" style="left:11px;top:15px"><svg width="13" height="13" viewBox="0 0 13 13"><path d="M2.800 6.700l2.600 2.600 4.900-5.400" stroke="#fff" stroke-width="1.900" fill="none"/></svg></div><div class="c" style="left:44px;width:155px"><span class="t" style="left:6.500px">Debnár, Daniel</span></div><div class="c" style="left:198px;width:237px"><span class="t g" style="left:19px">(zatial neaktualizované)</span><div class="rb" style="left:169px"><svg width="15.400" height="15.400" viewBox="0 0 30 30"><circle cx="15" cy="15" r="14" fill="#f6cb80" stroke="#e3b266" stroke-width="1.500"/><path d="M19.30 8.86 A7.5 7.5 0 0 0 7.72 13.19" stroke="#fff" stroke-width="2.600" fill="none"/><path d="M10.70 21.14 A7.5 7.5 0 0 0 22.28 16.81" stroke="#fff" stroke-width="2.600" fill="none"/><path d="M3.600 13.600L11.900 12.400L8.500 20.200Z" fill="#fff"/><path d="M26.400 16.400L18.100 17.600L21.500 9.800Z" fill="#fff"/></svg></div></div><div class="c" style="left:435px;width:113px"><span class="t" style="left:7px">oadm</span></div><div class="c" style="left:548px;width:87px"></div><div class="c" style="left:635px;width:86px"></div><div class="c" style="left:721px;width:86px"></div><div class="c" style="left:807px;width:87px"></div><div class="c" style="left:894px;width:87px"></div></div><div class="row" style="top:372px"><div class="cb" style="left:11px;top:15px"><svg width="13" height="13" viewBox="0 0 13 13"><path d="M2.800 6.700l2.600 2.600 4.900-5.400" stroke="#fff" stroke-width="1.900" fill="none"/></svg></div><div class="c" style="left:44px;width:155px"><span class="t" style="left:6.500px">Mokráň, Marek</span></div><div class="c" style="left:198px;width:237px"><span class="t g" style="left:19px">(zatial neaktualizované)</span><div class="rb" style="left:169px"><svg width="15.400" height="15.400" viewBox="0 0 30 30"><circle cx="15" cy="15" r="14" fill="#f6cb80" stroke="#e3b266" stroke-width="1.500"/><path d="M19.30 8.86 A7.5 7.5 0 0 0 7.72 13.19" stroke="#fff" stroke-width="2.600" fill="none"/><path d="M10.70 21.14 A7.5 7.5 0 0 0 22.28 16.81" stroke="#fff" stroke-width="2.600" fill="none"/><path d="M3.600 13.600L11.900 12.400L8.500 20.200Z" fill="#fff"/><path d="M26.400 16.400L18.100 17.600L21.500 9.800Z" fill="#fff"/></svg></div></div><div class="c" style="left:435px;width:113px"><span class="t" style="left:7px">oadm</span></div><div class="c" style="left:548px;width:87px"></div><div class="c" style="left:635px;width:86px"></div><div class="c" style="left:721px;width:86px"></div><div class="c" style="left:807px;width:87px"></div><div class="c" style="left:894px;width:87px"></div></div><div class="abs" style="left:0;top:0;width:1px;height:415px;background:#d6d6d6"></div><div class="abs" style="left:0;top:415px;width:981px;height:2px;background:#8d9dad"></div></div>
<svg class="abs" style="left:6px;top:15px;z-index:4" width="60" height="75" viewBox="0 0 60 75"><polygon points="14.3,2.4 38.0,2.4 38.0,33.5 48.0,33.5 26.2,68.0 3.8,33.5 14.3,33.5" fill="#ec1c24"/><polygon points="19.1,7.1 33.2,7.1 33.2,38.3 41.6,38.3 26.2,60.8 10.7,38.3 19.1,38.3" fill="#fff200"/></svg>
<svg class="abs" style="left:512px;top:46px;z-index:4" width="60" height="75" viewBox="0 0 60 75"><polygon points="16.2,4.3 39.9,4.3 39.9,32.9 50.0,32.9 28.0,67.3 5.9,32.9 16.2,32.9" fill="#ec1c24"/><polygon points="20.8,9.0 35.3,9.0 35.3,38.0 43.0,38.0 28.0,60.3 12.6,38.0 20.8,38.0" fill="#fff200"/></svg>
</div>
</div>
<div id="bottomline"></div>
</body>
</html>
